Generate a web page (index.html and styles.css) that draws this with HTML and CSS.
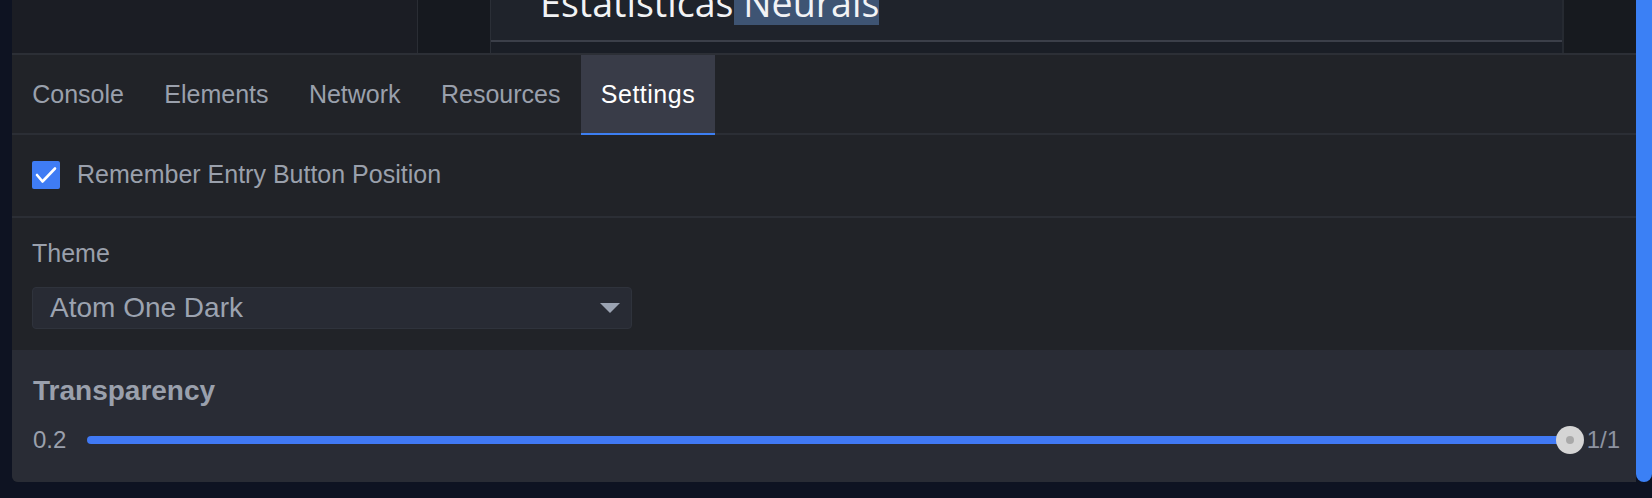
FILE: index.html
```html
<!DOCTYPE html>
<html lang="pt">
<head>
<meta charset="utf-8">
<title>Settings</title>
<link rel="stylesheet" href="styles.css">
</head>
<body>
<div class="app">
  <div class="main">
    <div class="page">
      <div class="pane-left"></div>
      <div class="pane-gutter"></div>
      <div class="pane-content">
        <div class="title-clip"><h1 class="title">Estatísticas<span class="hl"> Neurais</span></h1></div>
        <div class="title-rule"></div>
      </div>
      <div class="pane-right"></div>
    </div>
    <section class="devtools">
      <nav class="tabs">
        <div class="tab">Console</div>
        <div class="tab">Elements</div>
        <div class="tab">Network</div>
        <div class="tab">Resources</div>
        <div class="tab active">Settings</div>
      </nav>
      <div class="check-row">
        <span class="checkbox">
          <svg viewBox="0 0 28 28" width="28" height="28"><polyline points="5,14 10.5,20.5 23,7.5" fill="none" stroke="#ffffff" stroke-width="2.6" stroke-linecap="round" stroke-linejoin="round"/></svg>
        </span>
        <span class="check-label">Remember Entry Button Position</span>
      </div>
      <div class="theme">
        <div class="field-label">Theme</div>
        <div class="select">
          <span class="select-value">Atom One Dark</span>
          <svg class="caret" viewBox="0 0 20 10" width="20" height="10"><polygon points="0,0 20,0 10,10" fill="#9ba3b2"/></svg>
        </div>
      </div>
      <div class="transparency">
        <div class="section-title">Transparency</div>
        <div class="slider-row">
          <span class="slider-val">0.2</span>
          <div class="track"><span class="thumb"></span></div>
          <span class="slider-val max">1/1</span>
        </div>
      </div>
    </section>
  </div>
  <div class="scrollbar"></div>
</div>
</body>
</html>
```
FILE: styles.css
```css
* { box-sizing: border-box; }
html, body { margin: 0; height: 498px; overflow: hidden; }
body {
  background: #0e1322;
  padding: 0 0 16px 12px;
  font-family: "Liberation Sans", Arial, sans-serif;
}
.app { display: flex; height: 482px; }
.main { flex: 1; display: flex; flex-direction: column; min-width: 0; }
.scrollbar { width: 16px; background: #3b80f5; border-radius: 0 0 8px 8px; }

.page { height: 53px; display: flex; }
.pane-left { width: 406px; background: #1b1d24; border-right: 1px solid #2a2d34; }
.pane-gutter { width: 73px; background: #16191f; border-right: 1px solid #2b2f37; }
.pane-content { flex: 1; display: flex; flex-direction: column; background: #1a1e26; }
.pane-right { width: 74px; background: #171a1f; border-left: 2px solid #262a31; }
.title-clip { height: 40px; overflow: hidden; background: #1f232b; padding-left: 49px; }
.title {
  margin: -19px 0 0;
  font: 400 37.6px/44px "Open Sans", "Noto Sans", sans-serif;
  color: #f2f3f5;
  white-space: nowrap;
}
.hl { display: inline-block; background: #3e5473; white-space: pre; }
.title-rule { height: 2px; background: #3b3f49; }

.devtools {
  flex: 1;
  display: flex;
  flex-direction: column;
  background: #212328;
  border-top: 2px solid #2c2f36;
  border-bottom-left-radius: 6px;
  overflow: hidden;
}
.tabs { display: flex; height: 80px; box-shadow: inset 0 -2px 0 #2b2e35; }
.tab {
  padding: 0 20.2px;
  height: 78px;
  line-height: 78px;
  font-size: 25px;
  color: #9aa0ac;
}
.tab.active {
  height: 80px;
  background: #393c48;
  color: #ffffff;
  letter-spacing: 0.5px;
  box-shadow: inset 0 -2px 0 #3d7ff2;
}

.check-row {
  height: 83px;
  display: flex;
  align-items: center;
  gap: 17px;
  padding: 0 20px 2px;
  border-bottom: 2px solid #2b2e35;
}
.checkbox {
  width: 28px; height: 28px;
  background: #3f7cf4;
  border-radius: 2px;
  display: flex;
}
.check-label { font-size: 25px; color: #9aa0ac; }

.theme { height: 132px; padding: 20px 20px 0; }
.field-label { font-size: 25px; line-height: 30px; color: #9aa0ac; }
.select {
  margin-top: 19px;
  width: 600px;
  height: 42px;
  display: flex;
  align-items: center;
  justify-content: space-between;
  padding: 0 11px 0 17px;
  background: #282b34;
  border: 1px solid #2f333c;
  border-radius: 4px;
}
.select-value { font-size: 28px; color: #9ca3b0; }

.transparency {
  flex: 1;
  background: #292c35;
  padding: 24px 16px 0 21px;
}
.section-title { font-size: 28px; font-weight: 700; line-height: 34px; color: #9aa0ac; }
.slider-row { margin-top: 17px; height: 30px; display: flex; align-items: center; }
.slider-val { font-size: 24px; color: #9aa0ac; }
.slider-val.max { margin-left: 17px; color: #8d93a0; }
.track {
  flex: 1;
  margin-left: 21px;
  height: 8px;
  border-radius: 4px;
  background: #4079f4;
  position: relative;
}
.thumb {
  position: absolute;
  right: -14px;
  top: -10px;
  width: 28px; height: 28px;
  border-radius: 50%;
  background: #d5d5d5;
  display: flex;
  align-items: center;
  justify-content: center;
}
.thumb::after {
  content: "";
  width: 8px; height: 8px;
  border-radius: 50%;
  background: #a9a9a9;
}
```
